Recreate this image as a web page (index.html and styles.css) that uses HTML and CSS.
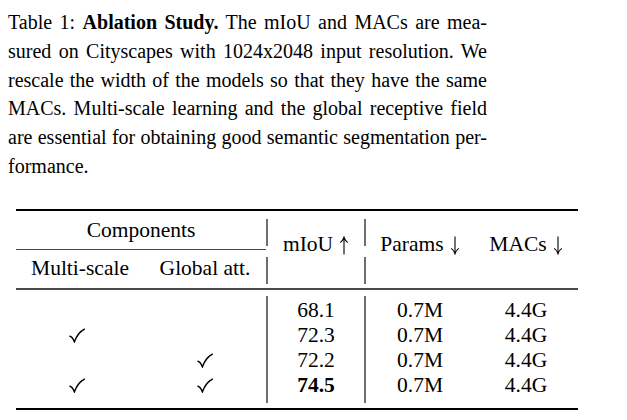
FILE: index.html
```html
<!DOCTYPE html>
<html lang="en">
<head>
<meta charset="utf-8">
<title>Table 1: Ablation Study</title>
<link rel="stylesheet" href="styles.css">
</head>
<body>
<div class="caption">
  <span class="line">Table 1: <b>Ablation Study.</b> The mIoU and MACs are mea-</span>
  <span class="line">sured on Cityscapes with 1024x2048 input resolution. We</span>
  <span class="line">rescale the width of the models so that they have the same</span>
  <span class="line">MACs. Multi-scale learning and the global receptive field</span>
  <span class="line">are essential for obtaining good semantic segmentation per-</span>
  <span class="line last">formance.</span>
</div>

<div class="table">
  <div class="rule-heavy"></div>
  <div class="head">
    <div class="h-components">Components</div>
    <div class="cmid"></div>
    <div class="vsep vsep-a c3"></div>
    <div class="vsep vsep-b c3"></div>
    <div class="vsep vsep-a c4"></div>
    <div class="vsep vsep-b c4"></div>
    <div class="h-metric c3">mIoU<svg class="arrow" viewBox="0 0 10 19" aria-label="↑"><path d="M5 2.2V18.5M1.2 6.6C3 5.4 4.3 3.8 5 1.2C5.7 3.8 7 5.4 8.8 6.6"/></svg></div>
    <div class="h-metric c4">Params<svg class="arrow" viewBox="0 0 10 19" aria-label="↓"><path d="M5 0.5V16.8M1.2 12.4C3 13.6 4.3 15.2 5 17.8C5.7 15.2 7 13.6 8.8 12.4"/></svg></div>
    <div class="h-metric c5">MACs<svg class="arrow" viewBox="0 0 10 19" aria-label="↓"><path d="M5 0.5V16.8M1.2 12.4C3 13.6 4.3 15.2 5 17.8C5.7 15.2 7 13.6 8.8 12.4"/></svg></div>
    <div class="h-sub c1">Multi-scale</div>
    <div class="h-sub c2">Global att.</div>
  </div>
  <div class="rule-mid"></div>
  <div class="body">
    <div class="cell first"></div><div class="cell first"></div><div class="cell first sep">68.1</div><div class="cell first sep">0.7M</div><div class="cell first">4.4G</div>
    <div class="cell check"><svg class="tick" viewBox="0 0 16 15"><path d="M1 8.2C2.6 8.6 4 10.4 5.4 13.8C7.6 8 10.8 3.6 15.4 1.2"/></svg></div><div class="cell"></div><div class="cell sep">72.3</div><div class="cell sep">0.7M</div><div class="cell">4.4G</div>
    <div class="cell"></div><div class="cell check"><svg class="tick" viewBox="0 0 16 15"><path d="M1 8.2C2.6 8.6 4 10.4 5.4 13.8C7.6 8 10.8 3.6 15.4 1.2"/></svg></div><div class="cell sep">72.2</div><div class="cell sep">0.7M</div><div class="cell">4.4G</div>
    <div class="cell last check"><svg class="tick" viewBox="0 0 16 15"><path d="M1 8.2C2.6 8.6 4 10.4 5.4 13.8C7.6 8 10.8 3.6 15.4 1.2"/></svg></div><div class="cell last check"><svg class="tick" viewBox="0 0 16 15"><path d="M1 8.2C2.6 8.6 4 10.4 5.4 13.8C7.6 8 10.8 3.6 15.4 1.2"/></svg></div><div class="cell last sep best">74.5</div><div class="cell last sep">0.7M</div><div class="cell last">4.4G</div>
  </div>
  <div class="rule-heavy"></div>
</div>
</body>
</html>
```

FILE: styles.css
```css
html, body {
  background: #ffffff;
}

body {
  margin: 8px;
  font-family: "Liberation Serif", "Times New Roman", serif;
  color: #000000;
}

.caption {
  width: 479px;
  font-size: 20px;
  line-height: 28.8px;
}

.caption .line {
  display: block;
  text-align: justify;
  text-align-last: justify;
}

.caption .line.last {
  text-align: left;
  text-align-last: left;
}

.table {
  width: 562px;
  margin: 28px 0 0 8px;
  font-size: 21.5px;
  line-height: 25px;
}

.rule-heavy {
  height: 2px;
  background: #000000;
}

.rule-mid {
  height: 2px;
  background: #4a4a4a;
}

.head {
  display: grid;
  grid-template-columns: 128px 122px 98px 110px 104px;
  grid-template-rows: 38px 1px 38px;
}

.head .c1 { grid-column: 1; }
.head .c2 { grid-column: 2; }
.head .c3 { grid-column: 3; }
.head .c4 { grid-column: 4; }
.head .c5 { grid-column: 5; }

.h-components {
  grid-column: 1 / 3;
  grid-row: 1;
  text-align: center;
  padding-top: 7px;
}

.cmid {
  grid-column: 1 / 3;
  grid-row: 2;
  background: #444444;
}

.vsep {
  border-left: 2px solid #6e6e6e;
}

.vsep-a {
  grid-row: 1;
  margin: 8px 0 3px;
}

.vsep-b {
  grid-row: 3;
  margin: 7px 0 4px;
}

.h-metric {
  grid-row: 1 / 4;
  align-self: start;
  text-align: center;
  padding-top: 21px;
  white-space: nowrap;
}

.h-metric.c3,
.h-metric.c4 {
  padding-left: 2px;
}

.h-sub {
  grid-row: 3;
  text-align: center;
  padding-top: 6px;
  white-space: nowrap;
}

.arrow {
  width: 10px;
  height: 19px;
  margin-left: 6px;
  vertical-align: -4px;
  fill: none;
  stroke: #000000;
  stroke-width: 1.1;
}

.body {
  display: grid;
  grid-template-columns: 128px 122px 98px 110px 104px;
  grid-auto-rows: auto;
  padding: 6px 0 5px;
}

.cell {
  height: 25px;
  text-align: center;
}

.cell.first {
  height: 27px;
  padding-top: 2px;
}

.cell.last {
  height: 30px;
  padding-bottom: 5px;
}

.cell.first,
.cell.last {
  box-sizing: border-box;
}

.cell.sep {
  border-left: 2px solid #6e6e6e;
}

.cell.check {
  display: flex;
  justify-content: center;
  align-items: center;
}

.cell.check:nth-child(5n+1) {
  padding-right: 6px;
}

.tick {
  width: 16px;
  height: 15px;
  fill: none;
  stroke: #000000;
  stroke-width: 1.5;
  stroke-linecap: round;
}

.cell.best {
  font-weight: bold;
}
```
